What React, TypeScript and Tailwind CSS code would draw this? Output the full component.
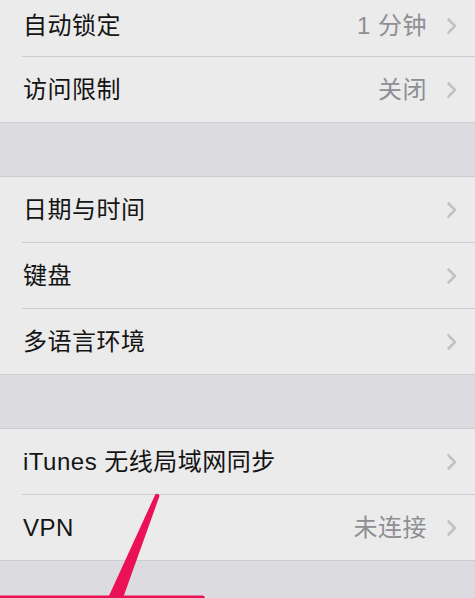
import React from 'react';

type Row = { label: string; value?: string };

const groups: { rows: Row[]; first?: boolean }[] = [
  { rows: [{ label: '自动锁定', value: '1 分钟' }, { label: '访问限制', value: '关闭' }], first: true },
  { rows: [{ label: '日期与时间' }, { label: '键盘' }, { label: '多语言环境' }] },
  { rows: [{ label: 'iTunes 无线局域网同步' }, { label: 'VPN', value: '未连接' }] },
];

const Chevron = () => (
  <svg width="12" height="18" viewBox="0 0 12 18" className="shrink-0">
    <path d="M2.5 2.5 L9 9 L2.5 15.5" fill="none" stroke="#c2c2c6" strokeWidth="2.6" strokeLinecap="round" strokeLinejoin="round" />
  </svg>
);

const SettingRow = ({ row, last, short }: { row: Row; last: boolean; short?: boolean }) => (
  <div className="relative">
    <div className={`flex items-center pl-[23px] pr-[17px] ${short ? 'h-[56px] pt-[2px] pb-[6px]' : 'h-[65px]'}`}>
      <span className="flex-1 text-[24px] text-[#141414] tracking-[0.5px]">{row.label}</span>
      {row.value && <span className="text-[24px] text-[#8e8e93] mr-[19px] tracking-[0.5px]">{row.value}</span>}
      <Chevron />
    </div>
    {!last && <div className="ml-[22px] h-px bg-[#cdccd1]" />}
  </div>
);

export default function App() {
  return (
    <div
      className="relative w-[475px] h-[598px] overflow-hidden bg-[#dcdbe0]"
      style={{ fontFamily: '"Liberation Sans", "Noto Sans CJK SC", sans-serif' }}
    >
      {groups.map((g, gi) => (
        <div key={gi} className={gi > 0 ? 'mt-[53px]' : ''}>
          <div className={`bg-[#ebebeb] border-b border-[#cdccd1] ${g.first ? '' : 'border-t'}`}>
            {g.rows.map((r, ri) => (
              <SettingRow key={r.label} row={r} last={ri === g.rows.length - 1} short={g.first && ri === 0} />
            ))}
          </div>
        </div>
      ))}

      {/* annotation overlay */}
      <svg className="absolute left-0 top-0 pointer-events-none" width="475" height="598" viewBox="0 0 475 598">
        <path d="M155.5 494 Q159 493 159.5 496 L123 598 L108 598 Z" fill="#ea1157" />
        <rect x="-10" y="595.5" width="215" height="12" rx="3" fill="#ea1157" />
      </svg>
    </div>
  );
}
